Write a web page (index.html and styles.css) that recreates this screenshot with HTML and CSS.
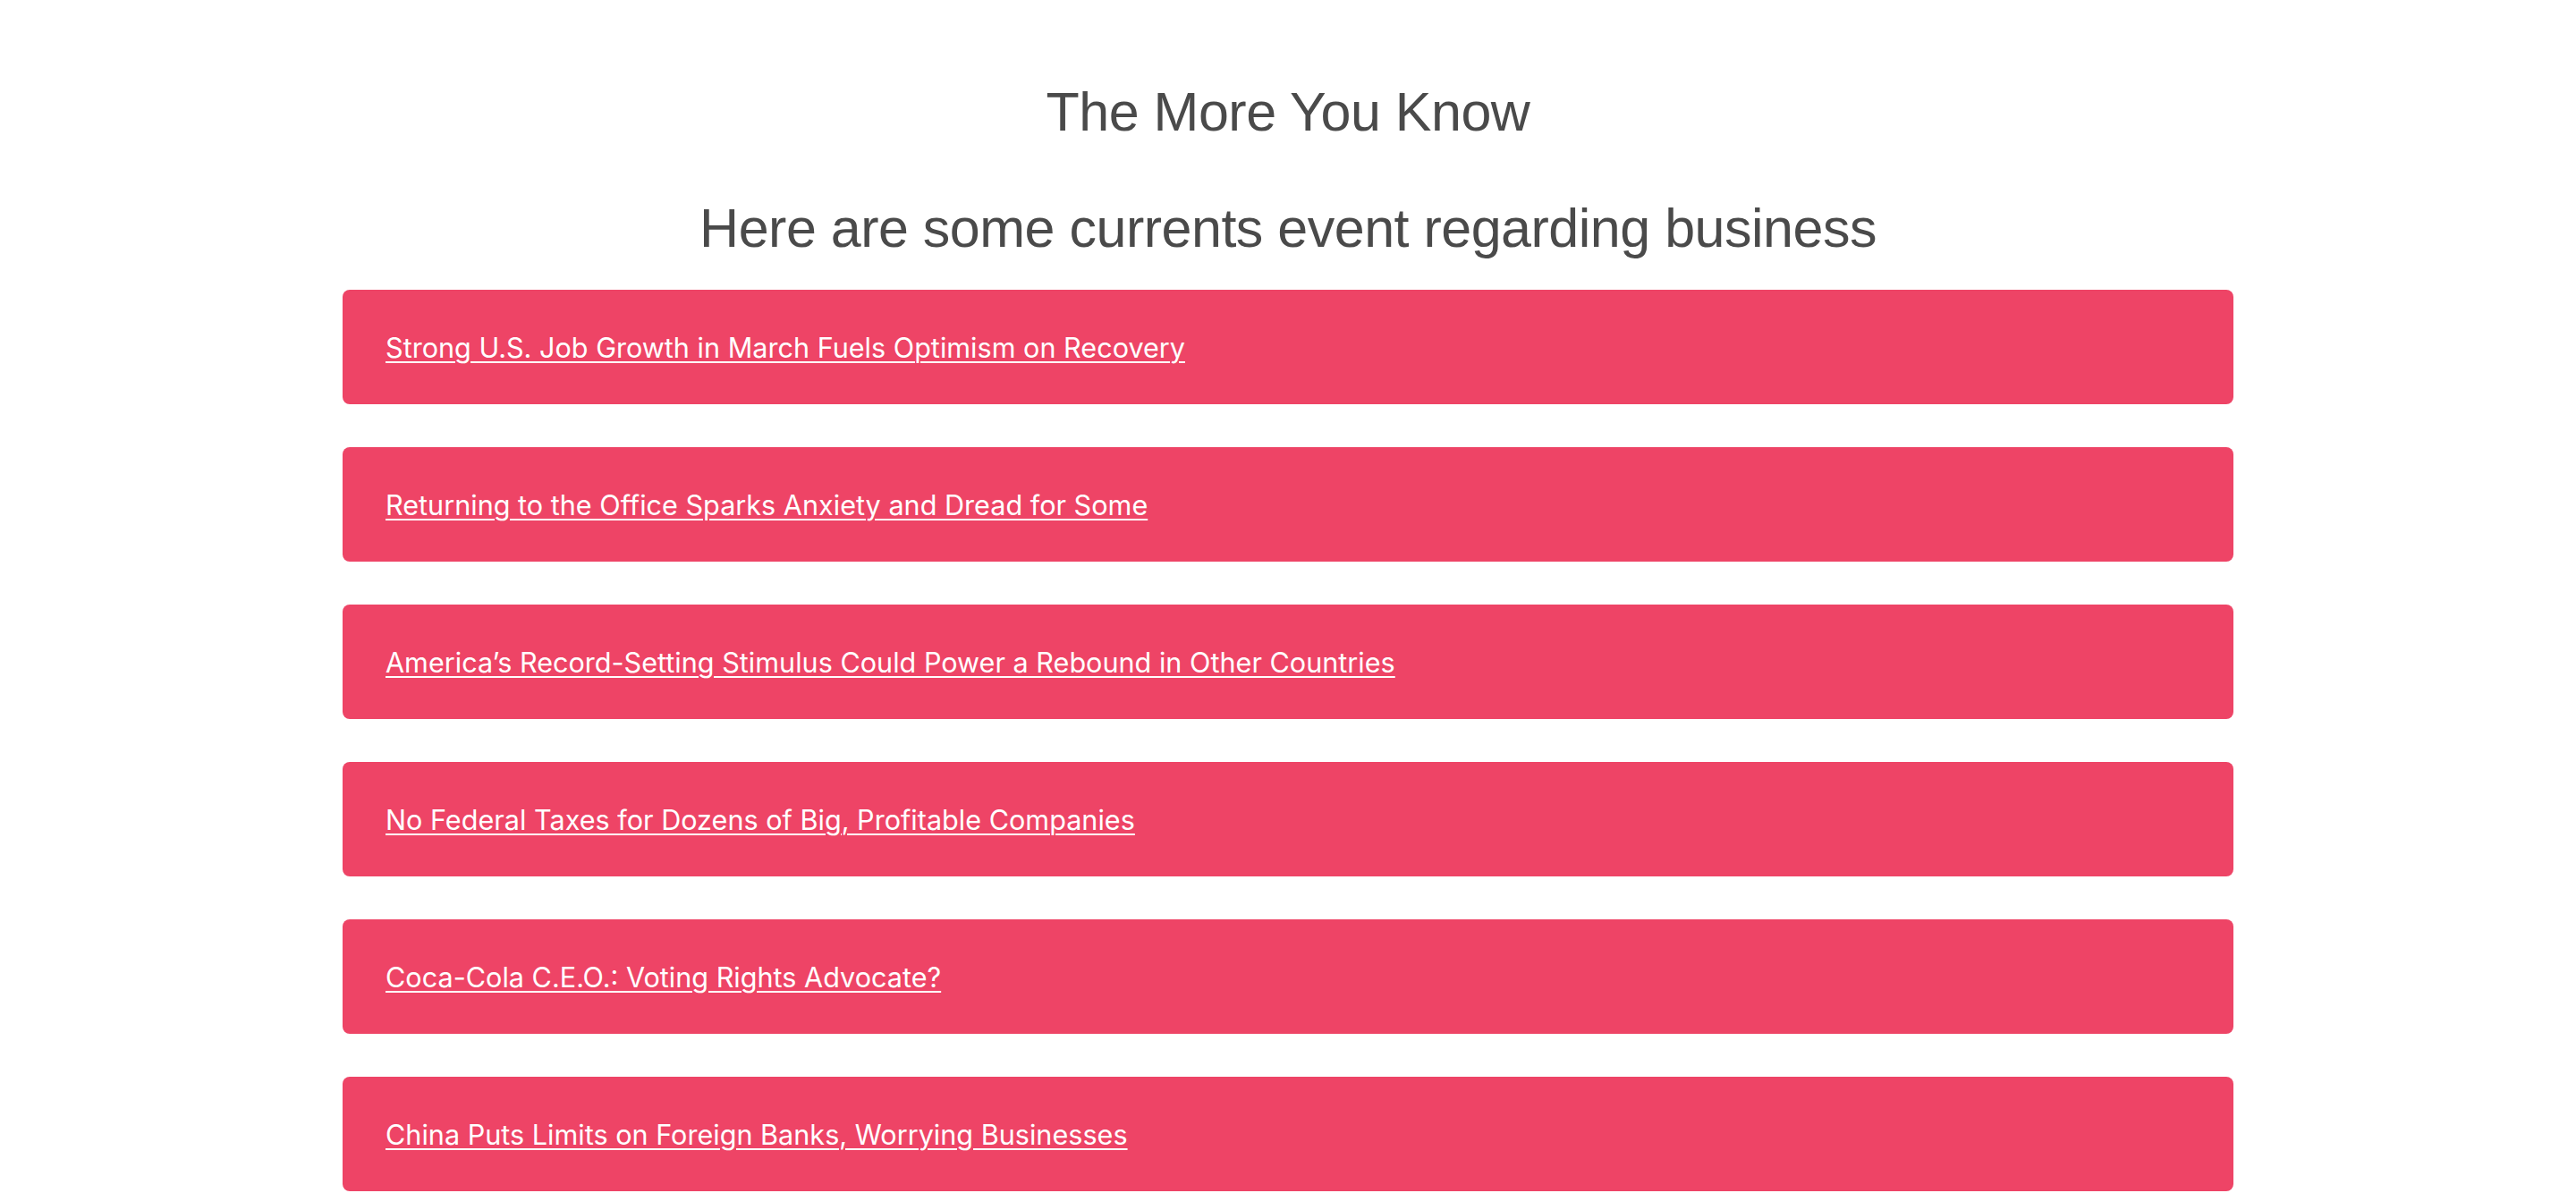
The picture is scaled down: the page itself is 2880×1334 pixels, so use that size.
FILE: index.html
```html
<!DOCTYPE html>
<html lang="en">
<head>
<meta charset="utf-8">
<title>The More You Know</title>
<link rel="stylesheet" href="styles.css">
</head>
<body>
<header class="intro">
  <h1 class="title">The More You Know</h1>
  <h2 class="subtitle">Here are some currents event regarding business</h2>
</header>
<main class="news">
  <div class="card"><a href="#">Strong U.S. Job Growth in March Fuels Optimism on Recovery</a></div>
  <div class="card"><a href="#">Returning to the Office Sparks Anxiety and Dread for Some</a></div>
  <div class="card"><a href="#">America’s Record-Setting Stimulus Could Power a Rebound in Other Countries</a></div>
  <div class="card"><a href="#">No Federal Taxes for Dozens of Big, Profitable Companies</a></div>
  <div class="card"><a href="#">Coca-Cola C.E.O.: Voting Rights Advocate?</a></div>
  <div class="card"><a href="#">China Puts Limits on Foreign Banks, Worrying Businesses</a></div>
</main>
</body>
</html>
```
FILE: styles.css
```css
html, body {
  margin: 0;
  padding: 0;
  background: #ffffff;
}
body {
  font-family: "Liberation Sans", Arial, sans-serif;
}
.intro {
  text-align: center;
  color: #4a4a4a;
  padding-top: 90px;
}
.title, .subtitle {
  margin: 0;
  font-weight: normal;
  font-size: 61px;
  line-height: 70px;
  letter-spacing: -0.5px;
}
.subtitle {
  margin-top: 60px;
}
.news {
  width: 2114px;
  margin: 34px auto 0;
  display: flex;
  flex-direction: column;
  gap: 48px;
}
.card {
  background: #ee4466;
  border-radius: 8px;
  height: 128px;
  display: flex;
  align-items: center;
  padding-left: 48px;
  box-sizing: border-box;
}
.card a {
  color: #ffffff;
  font-family: Inter, "Noto Sans", sans-serif;
  font-size: 30.6px;
  text-decoration: underline;
  text-underline-offset: 4px;
  text-decoration-thickness: 2px;
}
```
